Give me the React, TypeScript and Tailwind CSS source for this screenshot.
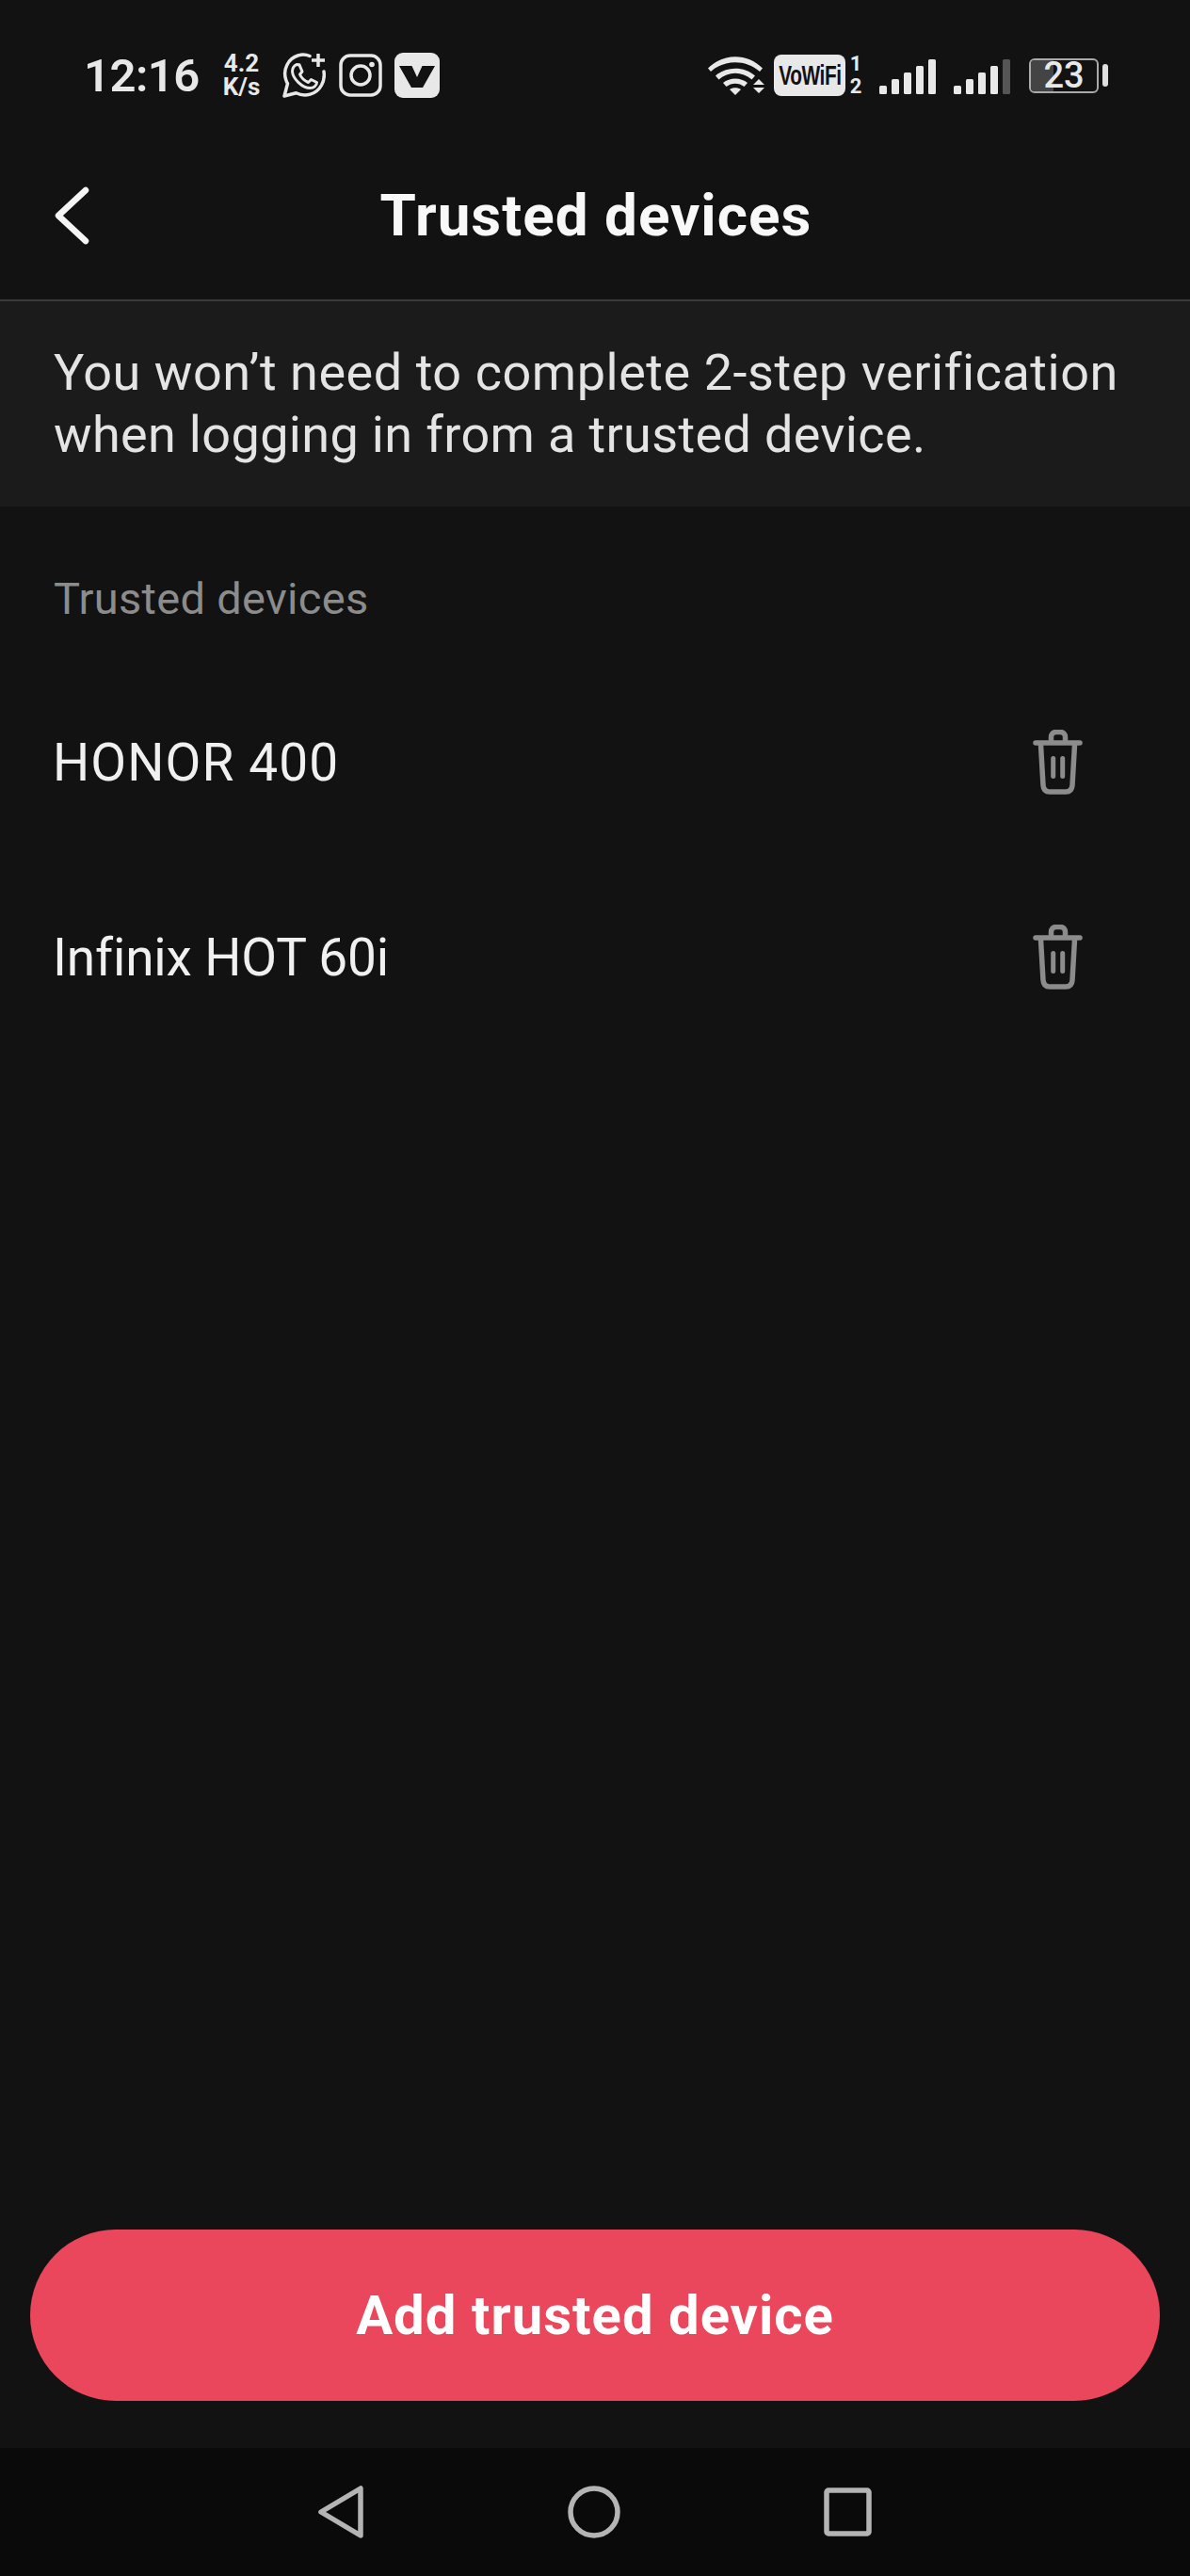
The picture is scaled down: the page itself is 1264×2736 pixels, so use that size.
const Trash = () => (
  <svg className="mb-[2px]" width="53" height="69" viewBox="0 0 53 69" fill="none" stroke="#8c8c8c" strokeWidth="5.500" strokeLinecap="round" strokeLinejoin="round">
    <path d="M3 14H50" />
    <path d="M19.500 12V8C19.500 4.500 21.500 2.500 25 2.500H29C32.500 2.500 34.500 4.500 34.500 8V12" />
    <path d="M8.500 16L11 59C11.300 63.500 13.500 66 18 66H35C39.500 66 41.700 63.500 42 59L44.500 16" />
    <path d="M21.700 30.500V49.500M31.700 30.500V49.500" strokeWidth="5" />
  </svg>
);

const Signal = ({ dim }: { dim?: boolean }) => (
  <svg width="60" height="40" viewBox="0 0 60 40" fill="#e8e8e8">
    <rect x="0" y="29" width="8" height="9" rx="1.500" />
    <rect x="13" y="22" width="8" height="16" rx="1.500" />
    <rect x="26" y="15" width="8" height="23" rx="1.500" />
    <rect x="39" y="8" width="8" height="30" rx="1.500" />
    <rect x="52" y="1" width="8" height="37" rx="1.500" fill={dim ? "#555555" : "#e8e8e8"} />
  </svg>
);

const devices = [
  { name: "HONOR 400", tracking: "tracking-[1.1px]" },
  { name: "Infinix HOT 60i", tracking: "tracking-[-0.17px]" },
];

export default function App() {
  return (
    <div className="flex h-[2736px] w-[1264px] flex-col bg-[#121212] font-['Roboto',sans-serif] text-[#e8e8e8]">
      <div className="flex h-[160px] items-center justify-between pl-[89px] pr-[87px]">
        <div className="flex items-center">
          <span className="w-[123px] text-[49px] font-semibold leading-none tracking-[-0.5px]">12:16</span>
          <div className="ml-[24px] flex w-[41px] flex-col items-center text-[26px] font-bold leading-[25px]">
            <span>4.2</span>
            <span>K/s</span>
          </div>
          <svg className="ml-[23px]" width="46" height="48" viewBox="0 0 46 48" fill="none" stroke="#e8e8e8" strokeWidth="3.500" strokeLinecap="round" strokeLinejoin="round">
            <path d="M29 3.500C25 1.800 21 1.500 17 2.800C6 6 0 18 3.800 29C4.300 30.500 4.800 31.500 5.500 32.800L2 46L14.500 42.800C24 47.500 36 44.500 41.500 34.500C44 30 44.800 25 44 20" />
            <path d="M15 12.500L18 12.800L21 20L18.500 23C20 26.500 24 30 27.500 31.500L30.500 28.500L36.500 31.500C36.500 35 33 37.500 29.500 37.500C21 37.500 11 27.500 10.500 20C10.500 16.500 12 14 15 12.500Z" strokeWidth="3" />
            <path d="M38 1V15M31 8H45" strokeWidth="3.500" strokeLinecap="butt" />
          </svg>
          <svg className="ml-[14px]" width="46" height="48" viewBox="0 0 46 48" fill="none" stroke="#e8e8e8" strokeWidth="3.500">
            <rect x="2" y="3" width="42" height="42" rx="10" />
            <circle cx="23" cy="24" r="10" />
            <circle cx="35" cy="12.500" r="2.800" fill="#e8e8e8" stroke="none" />
          </svg>
          <svg className="ml-[13px]" width="48" height="48" viewBox="0 0 48 48">
            <rect x="0" y="0" width="48" height="48" rx="9" fill="#e8e8e8" />
            <path d="M5 14H18.500L24 26L29.500 14H43L30 37H18Z" fill="#121212" />
          </svg>
        </div>
        <div className="flex items-center">
          <svg width="60" height="42" viewBox="0 0 60 42" fill="#e8e8e8">
            <path d="M0 13.500C16 -3 42 -3 58 13.500L55 17C40 4 18 4 3 17Z" />
            <path d="M8 21.500C19 11 39 11 50 21.500L46.500 25.500C36 16.500 22 16.500 11.500 25.500Z" />
            <path d="M16 29C23 23 35 23 42 29L38.500 33C33 28.500 25 28.500 19.500 33Z" />
            <path d="M23 36C26 33.500 32 33.500 35 36L29 42Z" />
            <path d="M48 31L54 25L60 31ZM48 34H60L54 40Z" />
          </svg>
          <div className="ml-[10px] flex h-[44px] w-[76px] items-center justify-center rounded-[8px] bg-[#e8e8e8] text-[#121212]">
            <span className="font-['Liberation_Sans',sans-serif] text-[26px] font-bold leading-none tracking-[-0.5px] [transform:scaleX(0.8)_scaleY(1.16)]">VoWiFi</span>
          </div>
          <div className="ml-[5px] flex w-[12px] flex-col items-center text-[22px] font-bold leading-[24px]">
            <span>1</span>
            <span>2</span>
          </div>
          <div className="ml-[19px] mt-[4px]"><Signal /></div>
          <div className="ml-[19px] mt-[4px]"><Signal dim /></div>
          <div className="ml-[20px] flex items-center">
            <div className="relative flex h-[37px] w-[74px] items-center justify-center rounded-[6px] border-2 border-[#aaaaaa]">
              <div className="absolute bottom-0 left-0 top-0 w-[24px] rounded-l-[4px] bg-[#444444]" />
              <span className="relative text-[38px] font-medium leading-[33px]">23</span>
            </div>
            <div className="ml-[4px] h-[24px] w-[6px] rounded-[3px] bg-[#e0e0e0]" />
          </div>
        </div>
      </div>

      <div className="grid h-[160px] grid-cols-[1fr_auto_1fr] items-center border-b-2 border-[#3a3a3a] pb-[20px]">
        <svg className="ml-[58px]" width="37" height="62" viewBox="0 0 37 62" fill="none" stroke="#f5f5f5" strokeWidth="6.500" strokeLinecap="round" strokeLinejoin="round">
          <path d="M33 4L4 31L33 58" />
        </svg>
        <h1 className="ml-[2px] text-[62px] font-bold leading-none tracking-[1px] text-[#f8f8f8]">Trusted devices</h1>
        <div />
      </div>

      <div className="flex h-[218px] flex-col justify-center bg-[#1b1b1b] px-[57px] text-[54px] leading-[66px] text-[#e4e4e4]">
        <p className="tracking-[0.54px]">You won’t need to complete 2-step verification</p>
        <p className="tracking-[0.34px]">when logging in from a trusted device.</p>
      </div>

      <div className="mt-[70px] px-[57px] text-[47px] leading-[56px] tracking-[0.3px] text-[#8c8c8c]">Trusted devices</div>

      <div className="mt-[43px] flex flex-col">
        {devices.map((d) => (
          <div key={d.name} className="flex h-[207px] items-center justify-between pl-[56px] pr-[114px] text-[55px] text-[#f0f0f0]">
            <span className={d.tracking}>{d.name}</span>
            <Trash />
          </div>
        ))}
      </div>

      <div className="mt-auto px-[32px] pb-[50px]">
        <button className="flex h-[182px] w-full items-center justify-center rounded-full bg-[#ea465c] text-[58px] font-bold tracking-[1px] text-white">
          Add trusted device
        </button>
      </div>

      <div className="flex h-[136px] items-center bg-[#0a0a0a] pl-[338px]">
        <svg width="48" height="56" viewBox="0 0 48 56" fill="none" stroke="#b4b4b4" strokeWidth="5.500" strokeLinejoin="round">
          <path d="M45 3V53L3 28Z" />
        </svg>
        <svg className="ml-[217px]" width="56" height="56" viewBox="0 0 56 56" fill="none" stroke="#b4b4b4" strokeWidth="5.500">
          <circle cx="28" cy="28" r="25" />
        </svg>
        <svg className="ml-[216px]" width="51" height="52" viewBox="0 0 51 52" fill="none" stroke="#b4b4b4" strokeWidth="5.500">
          <rect x="3" y="3" width="45" height="46" rx="2" />
        </svg>
      </div>
    </div>
  );
}
